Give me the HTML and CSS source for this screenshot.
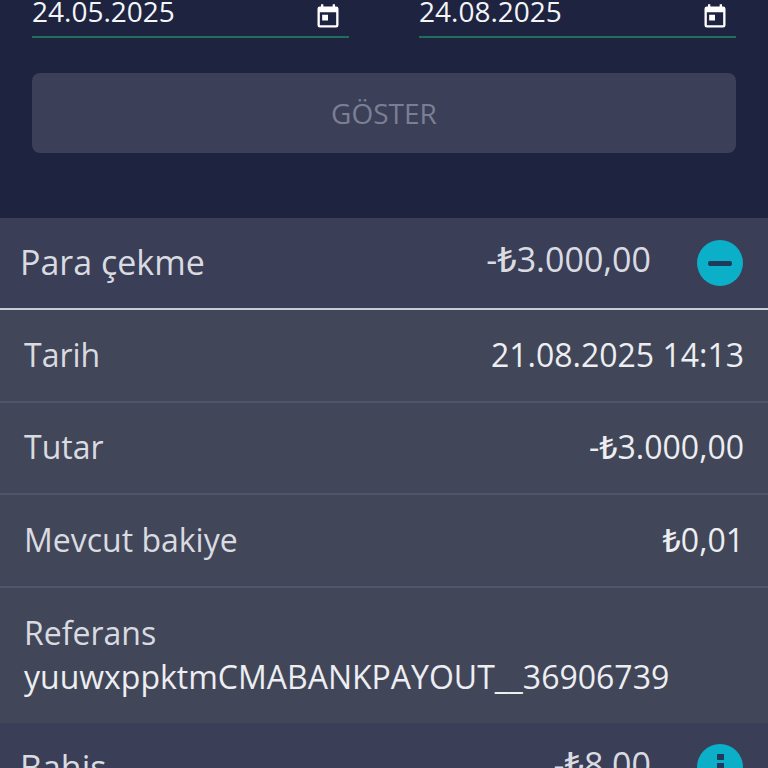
FILE: index.html
```html
<!DOCTYPE html>
<html lang="en">
<head>
    <meta charset="UTF-8">
    <meta name="viewport" content="width=device-width, initial-scale=1.0">
    <title>Hesap hareketleri</title>
    <link rel="stylesheet" href="styles.css">
</head>
<body>
    <div class="filter">
        <div class="dates">
            <div class="date-field">
                <span>24.05.2025</span>
                <svg class="cal" viewBox="0 0 24 24"><path d="M19 3h-1V1h-2v2H8V1H6v2H5a2 2 0 0 0-2 2v14a2 2 0 0 0 2 2h14a2 2 0 0 0 2-2V5a2 2 0 0 0-2-2zm0 16H5V8h14v11zM7 10h5v5H7z"/></svg>
            </div>
            <div class="date-field">
                <span>24.08.2025</span>
                <svg class="cal" viewBox="0 0 24 24"><path d="M19 3h-1V1h-2v2H8V1H6v2H5a2 2 0 0 0-2 2v14a2 2 0 0 0 2 2h14a2 2 0 0 0 2-2V5a2 2 0 0 0-2-2zm0 16H5V8h14v11zM7 10h5v5H7z"/></svg>
            </div>
        </div>
        <button class="show-btn" disabled>GÖSTER</button>
    </div>

    <div class="tx-head open">
        <span class="tx-name">Para çekme</span>
        <span class="tx-sum">-<b class="lira">₺</b>3.000,00</span>
        <span class="round-btn"><span class="minus"></span></span>
    </div>
    <div class="tx-body">
        <div class="row"><span>Tarih</span><span class="val">21.08.2025 14:13</span></div>
        <div class="row"><span>Tutar</span><span class="val">-<b class="lira">₺</b>3.000,00</span></div>
        <div class="row"><span>Mevcut bakiye</span><span class="val"><b class="lira">₺</b>0,01</span></div>
        <div class="row ref">
            <span>Referans</span>
            <span class="val">yuuwxppktmCMABANKPAYOUT__36906739</span>
        </div>
    </div>

    <div class="tx-head">
        <span class="tx-name">Bahis</span>
        <span class="tx-sum">-<b class="lira">₺</b>8,00</span>
        <span class="round-btn info"><span class="info-dot"></span><span class="info-bar"></span></span>
    </div>
</body>
</html>
```

FILE: styles.css
```css
body {
    margin: 0;
    height: 768px;
    overflow: hidden;
    background-color: #1e2340;
    color: #d9dbe1;
    font-family: "Open Sans", "Noto Sans", sans-serif;
}

.filter {
    height: 218px;
    padding: 0 32px;
    box-sizing: border-box;
}

.dates {
    display: grid;
    grid-template-columns: 317px 317px;
    column-gap: 70px;
}

.date-field {
    height: 36px;
    border-bottom: 2px solid #1f6f5c;
    display: flex;
    justify-content: space-between;
    align-items: flex-start;
    color: #f4f5f7;
    font-size: 28px;
    line-height: 23px;
}

.cal {
    width: 28px;
    height: 28px;
    margin: 3px 7px 0 0;
    fill: #fff;
}

.show-btn {
    display: block;
    width: 100%;
    height: 80px;
    margin-top: 35px;
    padding: 0;
    border: none;
    border-radius: 8px;
    background-color: #3b3f58;
    color: #7b7f92;
    font-family: inherit;
    font-size: 28px;
}

.tx-head {
    height: 90px;
    padding: 0 25px 0 20px;
    display: flex;
    align-items: center;
    background-color: #3a3e56;
    font-size: 34px;
}

.tx-head.open {
    border-bottom: 2px solid #c9ccd4;
}

.tx-name {
    flex: 1;
    margin-bottom: 2px;
}

.tx-sum {
    margin: 0 46px 8px 0;
}

.lira {
    font-weight: 500;
}

.round-btn {
    width: 46px;
    height: 46px;
    border-radius: 50%;
    background-color: #0bb0c8;
    display: flex;
    flex-direction: column;
    align-items: center;
    justify-content: center;
}

.round-btn.info {
    margin-bottom: 2px;
}

.minus {
    width: 24px;
    height: 5px;
    border-radius: 2px;
    background-color: #1f3a5c;
}

.info-dot {
    width: 7px;
    height: 6px;
    margin-bottom: 3px;
    background-color: #1f3a5c;
}

.info-bar {
    width: 7px;
    height: 17px;
    background-color: #1f3a5c;
}

.tx-body {
    background-color: #424659;
}

.row {
    height: 92.67px;
    padding: 0 24px 2px;
    box-sizing: border-box;
    display: flex;
    justify-content: space-between;
    align-items: center;
    border-bottom: 2px solid #50556a;
    font-size: 32px;
}

.val {
    color: #eceef1;
}

.row.ref {
    height: 135px;
    display: block;
    padding-top: 23px;
    border-bottom: none;
    line-height: 44px;
}

.row.ref span {
    display: block;
}
```
